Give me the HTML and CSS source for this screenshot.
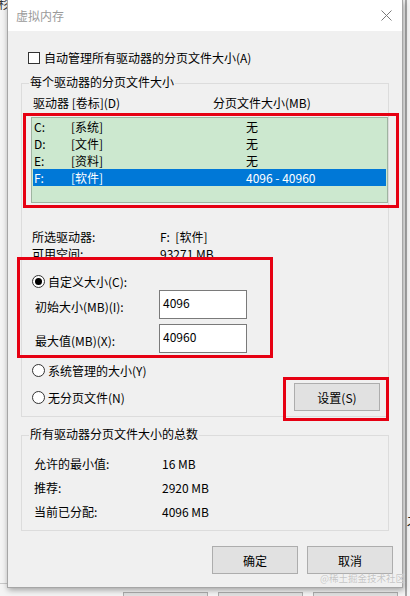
FILE: index.html
```html
<!DOCTYPE html>
<html lang="zh-CN">
<head>
<meta charset="utf-8">
<title>虚拟内存</title>
<link rel="stylesheet" href="styles.css">
</head>
<body>
<div class="desktop">
  <div class="behind">
    <div class="behind-text">杉</div>
    <div class="behind-rule"></div>
    <div class="behind-mark">ス</div>
    <div class="behind-buttons">
      <span class="bbtn"></span><span class="bbtn"></span><span class="bbtn"></span>
    </div>
  </div>

  <div class="dialog">
    <div class="titlebar">
      <span class="title">虚拟内存</span>
      <svg class="close" width="11" height="11" viewBox="0 0 11 11"><path d="M0.5 0.5 L10.5 10.5 M10.5 0.5 L0.5 10.5" stroke="#7a7a7a" stroke-width="1" fill="none"/></svg>
    </div>

    <div class="content">
      <div class="check-row">
        <span class="checkbox"></span>
        <span>自动管理所有驱动器的分页文件大小(A)</span>
      </div>

      <div class="group group-drives">
        <div class="legend">每个驱动器的分页文件大小</div>
        <div class="list-head">
          <span class="col-drive">驱动器 [卷标](D)</span>
          <span>分页文件大小(MB)</span>
        </div>
        <div class="listbox">
          <div class="lrow"><span class="c1">C:</span><span class="c2">[系统]</span><span>无</span></div>
          <div class="lrow"><span class="c1">D:</span><span class="c2">[文件]</span><span>无</span></div>
          <div class="lrow"><span class="c1">E:</span><span class="c2">[资料]</span><span>无</span></div>
          <div class="lrow selected"><span class="c1">F:</span><span class="c2">[软件]</span><span>4096 - 40960</span></div>
        </div>

        <div class="info">
          <div class="irow"><span class="ilabel">所选驱动器:</span><span>F:&nbsp;&nbsp;[软件]</span></div>
          <div class="irow"><span class="ilabel">可用空间:</span><span>93271 MB</span></div>
        </div>

        <div class="radio-row first">
          <span class="radio checked"></span><span>自定义大小(C):</span>
        </div>
        <div class="field-row">
          <span class="flabel">初始大小(MB)(I):</span>
          <span class="input">4096</span>
        </div>
        <div class="field-row second">
          <span class="flabel">最大值(MB)(X):</span>
          <span class="input">40960</span>
        </div>
        <div class="radio-row sys">
          <span class="radio"></span><span>系统管理的大小(Y)</span>
        </div>
        <div class="radio-btn-row">
          <div class="radio-row none">
            <span class="radio"></span><span>无分页文件(N)</span>
          </div>
          <span class="btn btn-set">设置(S)</span>
        </div>
      </div>

      <div class="group group-total">
        <div class="legend">所有驱动器分页文件大小的总数</div>
        <div class="trow"><span class="tlabel">允许的最小值:</span><span>16 MB</span></div>
        <div class="trow"><span class="tlabel">推荐:</span><span>2920 MB</span></div>
        <div class="trow"><span class="tlabel">当前已分配:</span><span>4096 MB</span></div>
      </div>

      <div class="footer">
        <span class="btn">确定</span>
        <span class="btn">取消</span>
      </div>
    </div>

    <div class="hl hl-list"></div>
    <div class="hl hl-custom"></div>
    <div class="hl hl-set"></div>
    <div class="watermark">@稀土掘金技术社区</div>
  </div>
</div>
</body>
</html>
```

FILE: styles.css
```css
* { box-sizing: border-box; }

html, body {
  margin: 0;
  padding: 0;
}

body {
  font-family: "Noto Sans CJK SC", "Microsoft YaHei", sans-serif;
  font-size: 12px;
  line-height: 17px;
  color: #000;
}

.desktop {
  position: relative;
  width: 410px;
  height: 596px;
  overflow: hidden;
  background: #f2f2f2;
}

/* underlying window */
.behind {
  position: absolute;
  inset: 0;
  background: #f4f4f4;
}
.behind::after {
  content: "";
  position: absolute;
  top: 0;
  bottom: 0;
  left: 405px;
  width: 2px;
  background: #a8a8a8;
}
.behind-text {
  position: absolute;
  left: -2px;
  top: -5px;
  font-size: 12px;
  color: #333;
}
.behind-rule {
  position: absolute;
  left: 0;
  top: 583px;
  width: 8px;
  height: 1px;
  background: #c8c8c8;
}
.behind-mark {
  position: absolute;
  left: 406px;
  top: 512px;
  font-size: 12px;
  color: #222;
}
.behind-buttons {
  position: absolute;
  left: 123px;
  top: 592px;
  display: flex;
  gap: 10px;
}
.bbtn {
  width: 85px;
  height: 20px;
  background: #e1e1e1;
  border: 1px solid #adadad;
}

/* dialog window */
.dialog {
  position: absolute;
  left: 7px;
  top: 0;
  width: 396px;
  height: 588px;
  background: #f0f0f0;
  border: 1px solid #a6a6a6;
  border-top: none;
  box-shadow: 1px 2px 6px rgba(0, 0, 0, 0.35);
}

.titlebar {
  height: 31px;
  background: #fff;
  display: flex;
  align-items: center;
  justify-content: space-between;
  padding: 0 9px 1px 8px;
}
.title {
  color: #9a9a9a;
  font-size: 12px;
}
.close {
  display: block;
  margin-right: 1px;
}

.content {
  padding: 0 13px;
}

.check-row {
  display: flex;
  align-items: center;
  margin-top: 18px;
  padding-left: 7px;
  gap: 4px;
}
.checkbox {
  width: 12px;
  height: 12px;
  background: #fff;
  border: 1px solid #333;
}

.group {
  position: relative;
  border: 1px solid #dcdcdc;
  padding-left: 10px;
}
.legend {
  position: absolute;
  left: 7px;
  top: -11px;
  padding: 0 1px;
  background: #f0f0f0;
}

.group-drives {
  margin-top: 17px;
  padding-top: 10px;
  padding-bottom: 5px;
}

.list-head {
  display: flex;
  margin-left: 1px;
}
.col-drive {
  width: 180px;
}

.listbox {
  margin-top: 6px;
  margin-left: -1px;
  width: 357px;
  height: 86px;
  background: #cce8cf;
  border: 1px solid #9fb4a1;
  padding: 0 1px;
}
.lrow {
  display: flex;
  height: 17px;
  padding-left: 1px;
}
.lrow .c1 { width: 37px; }
.lrow .c2 { width: 175px; }
.lrow.selected {
  background: #0078d7;
  color: #fff;
}

.info {
  margin-top: 25px;
}
.irow {
  display: flex;
}
.ilabel {
  width: 128px;
}

.radio-row {
  display: flex;
  align-items: center;
  gap: 3px;
}
.radio {
  width: 13px;
  height: 13px;
  border: 1px solid #333;
  border-radius: 50%;
  background: #fff;
  display: flex;
  align-items: center;
  justify-content: center;
}
.radio.checked::after {
  content: "";
  width: 7px;
  height: 7px;
  border-radius: 50%;
  background: #000;
}
.radio-row.first {
  margin-top: 11px;
}

.field-row {
  display: flex;
  align-items: center;
  margin-top: 0;
  padding-left: 3px;
}
.field-row.second {
  margin-top: 5px;
}
.flabel {
  width: 124px;
  padding-top: 3px;
}
.input {
  width: 88px;
  height: 29px;
  background: #fff;
  border: 1px solid #7a7a7a;
  padding: 3px 0 0 3px;
}

.radio-row.sys {
  margin-top: 9px;
}
.radio-btn-row {
  display: flex;
  align-items: center;
  justify-content: space-between;
  margin-top: 4px;
  height: 28px;
  padding-right: 8px;
}

.btn {
  display: flex;
  align-items: center;
  justify-content: center;
  width: 86px;
  height: 28px;
  background: #e1e1e1;
  border: 1px solid #adadad;
}

.group-total {
  margin-top: 18px;
  padding-top: 16px;
  padding-bottom: 6px;
}
.trow {
  display: flex;
  height: 24px;
  line-height: 24px;
  padding-left: 2px;
}
.tlabel {
  width: 128px;
}

.footer {
  display: flex;
  justify-content: flex-end;
  gap: 9px;
  margin-top: 15px;
  margin-right: -4px;
}

/* red highlight frames drawn over the dialog */
.hl {
  position: absolute;
  border: 3px solid #e60012;
  pointer-events: none;
}
.hl-list {
  left: 15px;
  top: 113px;
  width: 376px;
  height: 95px;
}
.hl-custom {
  left: 9px;
  top: 257px;
  width: 256px;
  height: 101px;
}
.hl-set {
  left: 275px;
  top: 377px;
  width: 106px;
  height: 44px;
}

.watermark {
  position: absolute;
  left: 312px;
  top: 571px;
  font-size: 9.5px;
  line-height: 14px;
  color: #c4c4c4;
  text-shadow: 0 0 1px #fff;
  white-space: nowrap;
}
```
